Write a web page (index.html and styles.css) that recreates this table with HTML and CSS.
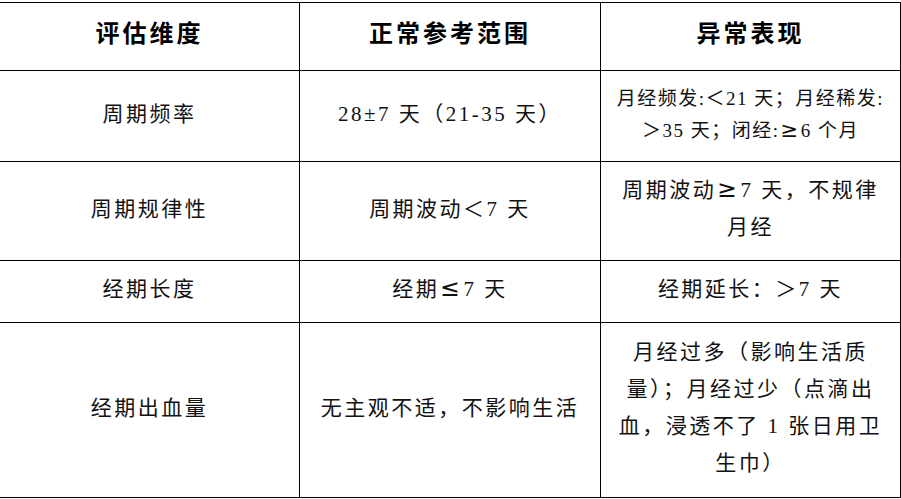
FILE: index.html
```html
<!DOCTYPE html>
<html lang="zh-CN">
<head>
<meta charset="utf-8">
<title>月经评估</title>
<link rel="stylesheet" href="styles.css">
</head>
<body>
<div class="table">
  <div class="cell head"><div class="in">评估维度</div></div>
  <div class="cell head"><div class="in">正常参考范围</div></div>
  <div class="cell head"><div class="in">异常表现</div></div>

  <div class="cell"><div class="in">周期频率</div></div>
  <div class="cell"><div class="in">28±7 天（21-35 天）</div></div>
  <div class="cell small"><div class="in">月经频发:＜21 天；月经稀发:<br>＞35 天；闭经:<span class="m">≥</span>6 个月</div></div>

  <div class="cell"><div class="in">周期规律性</div></div>
  <div class="cell"><div class="in">周期波动＜7 天</div></div>
  <div class="cell"><div class="in">周期波动<span class="m">≥</span>7 天，不规律<br>月经</div></div>

  <div class="cell"><div class="in">经期长度</div></div>
  <div class="cell"><div class="in">经期<span class="m">≤</span>7 天</div></div>
  <div class="cell"><div class="in">经期延长：＞7 天</div></div>

  <div class="cell"><div class="in">经期出血量</div></div>
  <div class="cell"><div class="in">无主观不适，不影响生活</div></div>
  <div class="cell"><div class="in">月经过多（影响生活质<br>量）；月经过少（点滴出<br>血，浸透不了 1 张日用卫<br>生巾）</div></div>
</div>
</body>
</html>
```
FILE: styles.css
```css
html, body {
  margin: 0;
  padding: 0;
  background: #fff;
}
body {
  padding-top: 2px;
  font-family: "Liberation Serif", "Noto Sans CJK SC", serif;
  color: #111;
}
.table {
  display: grid;
  grid-template-columns: 300px 301px 300px;
  grid-template-rows: 68px 91px 99px 62px 175px;
  border-top: 1px solid #000;
  width: 901px;
}
.cell {
  box-sizing: border-box;
  border-right: 1px solid #000;
  border-bottom: 1px solid #000;
  display: flex;
  align-items: center;
  justify-content: center;
  text-align: center;
  font-size: 21px;
  letter-spacing: 2.5px;
  line-height: 37px;
  padding: 0 8px 4px;
}
.in {
  white-space: nowrap;
}
.head {
  font-size: 24px;
  font-weight: 700;
  letter-spacing: 3px;
  color: #000;
}
.small {
  font-size: 19px;
  letter-spacing: 1.5px;
  line-height: 32px;
  padding: 0 4px 3px;
}
.m {
  font-family: "DejaVu Sans", sans-serif;
  font-size: 1.12em;
  line-height: 1;
  padding: 0 1px;
}
```
